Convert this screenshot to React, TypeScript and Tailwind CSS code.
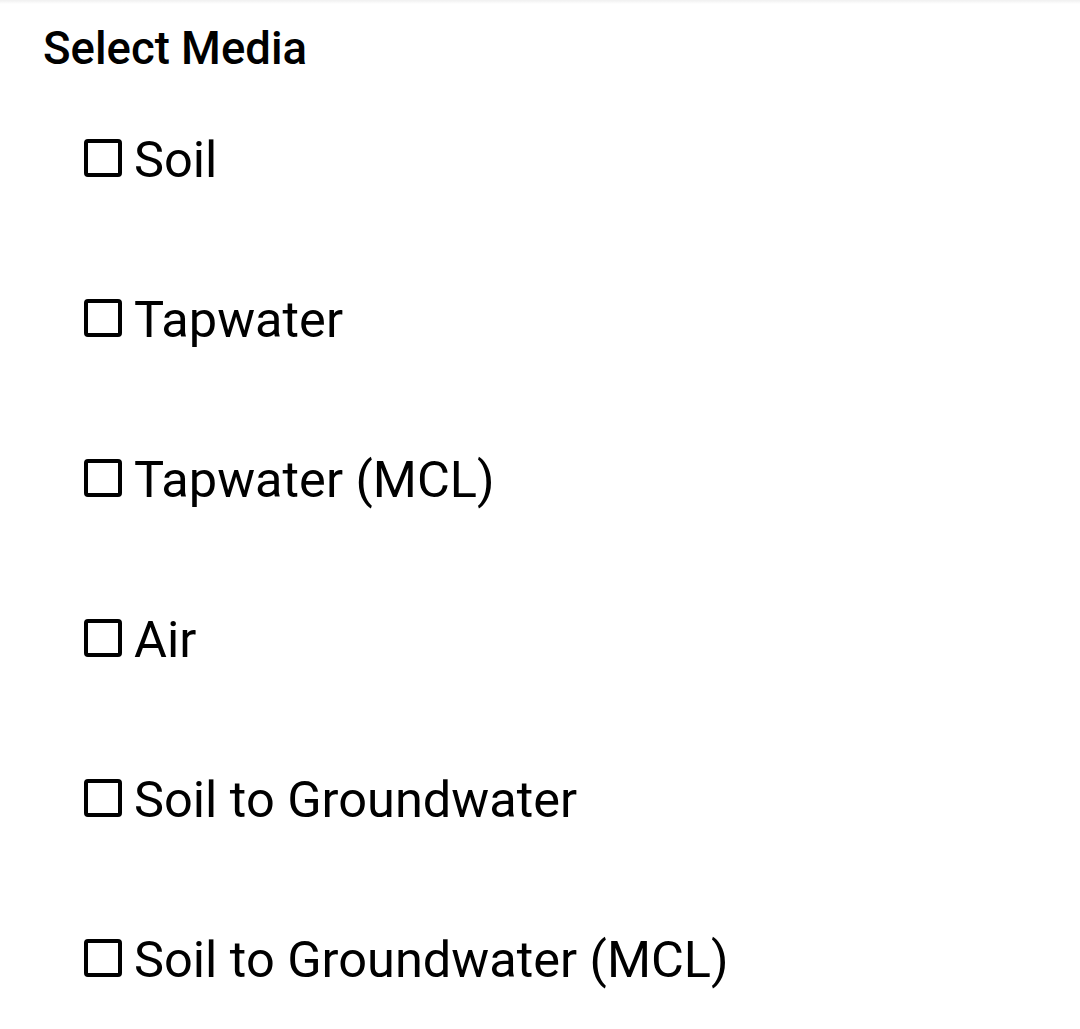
const media = [
  "Soil",
  "Tapwater",
  "Tapwater (MCL)",
  "Air",
  "Soil to Groundwater",
  "Soil to Groundwater (MCL)",
];

export default function App() {
  return (
    <div className="min-h-screen bg-white text-black font-['Roboto',sans-serif]">
      {/* faint shadow of the bar above */}
      <div className="h-[4px] bg-gradient-to-b from-black/[0.06] to-transparent" />
      <div className="pt-[19px] pl-[43px] text-[45.5px] leading-[52px] font-medium">
        Select Media
      </div>
      <div className="mt-[3px] flex flex-col">
        {media.map((m) => (
          <label
            key={m}
            className="flex h-[160px] items-center pl-[84px] cursor-pointer"
          >
            <span className="h-[38px] w-[38px] rounded-[4px] border-[4px] border-black" />
            <span className="ml-[12px] mt-[4px] text-[50.5px] leading-[60px]">{m}</span>
          </label>
        ))}
      </div>
    </div>
  );
}
